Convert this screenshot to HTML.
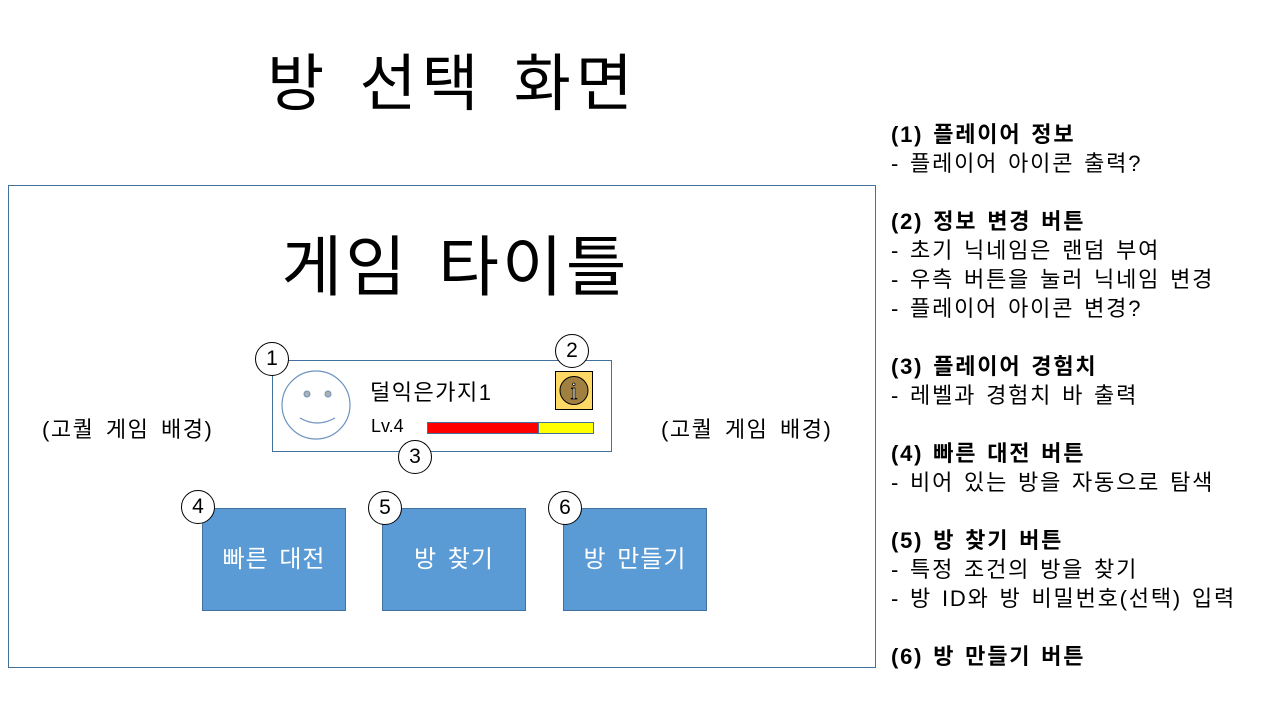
<!DOCTYPE html>
<html><head><meta charset="utf-8"><style>
body{margin:0;width:1280px;height:720px;background:#fff;position:relative;overflow:hidden;font-family:"Liberation Sans","Noto Sans CJK KR",sans-serif;color:#000}
.a{position:absolute}
.c{position:absolute;width:32px;height:32px;border:1px solid #000;border-radius:50%;background:#fff;text-align:center;line-height:32px;font-size:21px}
.btn{position:absolute;top:508px;width:142px;height:101px;background:#5b9bd5;border:1px solid #41719c;color:#fff;font-size:24px;text-align:center;line-height:101px;letter-spacing:1px;word-spacing:3px}
.r{position:absolute;left:891px;top:120px;font-size:22px;line-height:29px;white-space:pre;letter-spacing:1.8px;word-spacing:2px}
.bg{position:absolute;top:412px;font-size:22px;letter-spacing:1.5px;word-spacing:4px}
</style></head><body>
<div class="a" style="left:0;width:905px;top:45px;text-align:center;font-size:62px;line-height:80px;letter-spacing:5px;word-spacing:8px">방 선택 화면</div>
<div class="a" style="left:8px;top:185px;width:866px;height:481px;border:1px solid #41719c"></div>
<div class="a" style="left:8px;width:895px;top:229px;text-align:center;font-size:66px;line-height:76px;letter-spacing:3px;word-spacing:8px">게임 타이틀</div>
<div class="bg" style="left:42px">(고퀄 게임 배경)</div>
<div class="bg" style="left:661px">(고퀄 게임 배경)</div>
<div class="a" style="left:272px;top:360px;width:338px;height:90px;border:1px solid #41719c"></div>
<svg class="a" style="left:280px;top:370px" width="76" height="70"><circle cx="36" cy="35" r="34" fill="none" stroke="#6c93c0" stroke-width="1.2"/><circle cx="27" cy="24" r="3" fill="#b0b0b0" stroke="#6c93c0"/><circle cx="48" cy="24" r="3" fill="#b0b0b0" stroke="#6c93c0"/><path d="M20 48 Q37 58 55 48" fill="none" stroke="#6c93c0" stroke-width="1.2"/></svg>
<div class="a" style="left:370px;top:375px;font-size:22px;letter-spacing:1.5px">덜익은가지1</div>
<div class="a" style="left:371px;top:416px;font-size:18px">Lv.4</div>
<div class="a" style="left:427px;top:422px;width:110px;height:10px;background:#f00;border:1px solid #41719c;border-right:none"></div>
<div class="a" style="left:538px;top:422px;width:54px;height:10px;background:#ff0;border:1px solid #41719c"></div>
<svg class="a" style="left:555px;top:371px" width="38" height="39"><rect x="0.5" y="0.5" width="37" height="38" fill="#ffd966" stroke="#000"/><circle cx="19" cy="19.5" r="14" fill="#a08040" stroke="#000"/><text x="19" y="28" text-anchor="middle" font-family="Liberation Serif" font-size="24" fill="#fff" stroke="#000" stroke-width="0.8">i</text></svg>
<div class="c" style="left:255px;top:342px">1</div>
<div class="c" style="left:555px;top:334px">2</div>
<div class="c" style="left:398px;top:440px">3</div>
<div class="btn" style="left:202px">빠른 대전</div>
<div class="btn" style="left:382px">방 찾기</div>
<div class="btn" style="left:563px">방 만들기</div>
<div class="c" style="left:181px;top:490px">4</div>
<div class="c" style="left:368px;top:491px">5</div>
<div class="c" style="left:548px;top:491px">6</div>
<div class="r"><b>(1) 플레이어 정보</b>
- 플레이어 아이콘 출력?

<b>(2) 정보 변경 버튼</b>
- 초기 닉네임은 랜덤 부여
- 우측 버튼을 눌러 닉네임 변경
- 플레이어 아이콘 변경?

<b>(3) 플레이어 경험치</b>
- 레벨과 경험치 바 출력

<b>(4) 빠른 대전 버튼</b>
- 비어 있는 방을 자동으로 탐색

<b>(5) 방 찾기 버튼</b>
- 특정 조건의 방을 찾기
- 방 ID와 방 비밀번호(선택) 입력

<b>(6) 방 만들기 버튼</b></div>
</body></html>
